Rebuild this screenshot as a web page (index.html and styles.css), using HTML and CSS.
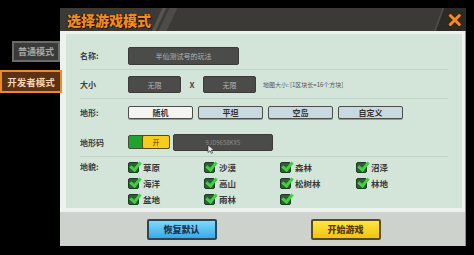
FILE: index.html
```html
<!DOCTYPE html>
<html lang="zh-CN">
<head>
  <meta charset="UTF-8">
  <title>选择游戏模式</title>
  <link rel="stylesheet" href="styles.css">
</head>
<body>
  <div class="screen">
    <div class="tabs">
      <div class="tab">普通模式</div>
      <div class="tab activo">开发者模式</div>
    </div>

    <div class="janela">
      <div class="titulo">
        <h1>选择游戏模式</h1>
        <div class="listras"><span></span><span></span></div>
        <div class="espaco"></div>
        <div class="canto">
          <svg width="14" height="14" viewBox="0 0 14 14">
            <path d="M2.5 2.5 L11.5 11.5 M11.5 2.5 L2.5 11.5" stroke="#3a2410" stroke-width="5" stroke-linecap="round"/>
            <path d="M2.5 2.5 L11.5 11.5 M11.5 2.5 L2.5 11.5" stroke="#f58a22" stroke-width="3" stroke-linecap="round"/>
          </svg>
        </div>
      </div>

      <div class="painel">
        <div class="conteudo">
          <div class="linha l-nome">
            <div class="rotulo">名称:</div>
            <div class="campo nome">半仙测试号的玩法</div>
          </div>

          <div class="linha l-tam">
            <div class="rotulo">大小</div>
            <div class="campo tam">无限</div>
            <div class="xis">X</div>
            <div class="campo tam">无限</div>
            <div class="dica">地图大小: [1区块长=16个方块]</div>
          </div>

          <div class="linha l-terreno">
            <div class="rotulo">地形:</div>
            <div class="opcoes">
              <button class="opcao marcada">随机</button>
              <button class="opcao">平坦</button>
              <button class="opcao">空岛</button>
              <button class="opcao">自定义</button>
            </div>
          </div>

          <div class="linha l-codigo">
            <div class="rotulo">地形码</div>
            <div class="chave"><span class="verde"></span><span class="amarelo">开</span></div>
            <div class="campo semente">9JD9658KXS
              <svg class="cursor" width="8" height="10" viewBox="0 0 8 10">
                <path d="M1 1 L1 8.5 L3 6.7 L4.4 9.4 L5.6 8.8 L4.3 6.2 L7 6.1 Z" fill="#f4f4f4" stroke="#333" stroke-width="0.7"/>
              </svg>
            </div>
          </div>

          <div class="linha l-bioma">
            <div class="rotulo">地貌:</div>
            <div class="grade">
              <div class="item"><i class="caixa"></i>草原</div>
              <div class="item"><i class="caixa"></i>沙漠</div>
              <div class="item"><i class="caixa"></i>森林</div>
              <div class="item"><i class="caixa"></i>沼泽</div>
              <div class="item"><i class="caixa"></i>海洋</div>
              <div class="item"><i class="caixa"></i>高山</div>
              <div class="item"><i class="caixa"></i>松树林</div>
              <div class="item"><i class="caixa"></i>林地</div>
              <div class="item"><i class="caixa"></i>盆地</div>
              <div class="item"><i class="caixa"></i>雨林</div>
              <div class="item"><i class="caixa"></i></div>
            </div>
          </div>
        </div>

        <div class="rodape">
          <button class="botao azul">恢复默认</button>
          <button class="botao amarelo-b">开始游戏</button>
        </div>
      </div>
    </div>
  </div>
</body>
</html>
```

FILE: styles.css
```css
*{
      padding: 0;
      margin: 0;
      box-sizing: border-box;
      font-family: "Noto Sans CJK SC", "Noto Sans", sans-serif;
}

body{
      background-color: #000;
      width: 474px;
      height: 255px;
      overflow: hidden;
}

.screen{
      display: flex;
      padding-top: 8px;
}

/* abas da esquerda */
.tabs{
      width: 60px;
      padding-top: 33px;
      display: flex;
      flex-direction: column;
      align-items: flex-end;
      gap: 8px;
}

.tab{
      width: 48px;
      height: 21px;
      display: flex;
      align-items: center;
      justify-content: center;
      background-color: #3a3a38;
      border: 2px solid #6b6b68;
      color: #a8a8a4;
      font-size: 9px;
      font-weight: 700;
}

.tab.activo{
      width: 62px;
      height: 23px;
      margin-right: -2px;
      z-index: 2;
      background-color: #5c3217;
      border-color: #ea8a28;
      color: #f4d6b6;
      font-size: 9.5px;
}

/* janela */
.janela{
      width: 406px;
}

.titulo{
      height: 23px;
      background-color: #3b3a36;
      display: flex;
      align-items: center;
      padding-left: 7px;
      overflow: hidden;
}

.titulo h1{
      font-size: 14px;
      font-weight: 900;
      color: #f28b1e;
      text-shadow: 1px 1px 0 #1e1408, -1px 0 0 #1e1408;
}

.listras{
      display: flex;
      gap: 3px;
      margin-left: 6px;
}

.listras span{
      width: 8px;
      height: 23px;
      background-color: #4d4c48;
      transform: skewX(-25deg);
}

.listras span:first-child{
      width: 4px;
      background-color: #55544f;
}

.espaco{
      flex: 1;
}

.canto{
      width: 32px;
      height: 23px;
      display: flex;
      align-items: center;
      justify-content: flex-end;
      padding-right: 5px;
      background-color: #2c2b28;
      border-left: 2px solid #4e4d49;
      transform: skewX(-20deg);
      margin-right: -4px;
}

.canto svg{
      transform: skewX(20deg);
      margin-right: 3px;
}

.painel{
      height: 215px;
      background-color: #cdd2cc;
      border-right: 1px solid #8e928c;
}

.conteudo{
      height: 181px;
      background-color: #d3e4d9;
      border-style: solid;
      border-color: #edf2ee;
      border-width: 3px 3px 4px 6px;
      padding: 0 14px;
}

.linha{
      display: flex;
      align-items: center;
}

.rotulo{
      width: 48px;
      font-size: 8px;
      color: #3e3e3e;
      font-weight: 700;
}

.l-nome{
      height: 36px;
      padding-top: 8px;
      border-bottom: 1px solid #c0d1c5;
}

.l-tam{
      height: 29px;
      border-bottom: 1px solid #c0d1c5;
      padding-top: 1px;
}

.l-terreno{
      height: 26px;
}

.l-codigo{
      height: 32px;
      padding-top: 3px;
      border-bottom: 1px solid #c0d1c5;
}

.l-bioma{
      align-items: flex-start;
      padding-top: 2px;
}

.l-bioma .rotulo{
      padding-top: 2px;
}

.campo{
      background-color: #4b4b49;
      border: 1px solid #3b3b39;
      border-radius: 2px;
      color: #b5b5b2;
      font-size: 7px;
      display: flex;
      align-items: center;
      justify-content: center;
}

.nome{
      width: 111px;
      height: 18px;
}

.tam{
      width: 53px;
      height: 17px;
}

.xis{
      width: 22px;
      text-align: center;
      font-size: 8px;
      font-weight: 700;
      color: #444;
}

.dica{
      margin-left: 7px;
      font-size: 6px;
      color: #555;
}

.opcoes{
      display: flex;
      gap: 5px;
}

.opcao{
      width: 65px;
      height: 13px;
      background-color: #c8dadf;
      border: 1px solid #4d4d4b;
      border-radius: 2px;
      box-shadow: 0 1px 0 #8e9a9a;
      font-size: 8px;
      font-weight: 700;
      color: #333;
      display: flex;
      align-items: center;
      justify-content: center;
}

.opcao.marcada{
      background-color: #f4f4f0;
}

.chave{
      display: flex;
      height: 14px;
      width: 42px;
      border: 1px solid #4a4a40;
      border-radius: 2px;
      background-color: #1fa42b;
}

.chave .verde{
      width: 13px;
}

.chave .amarelo{
      flex: 1;
      background-color: #f6cd18;
      border: 1px solid #5a4a14;
      border-radius: 2px;
      margin: -1px -1px -1px 0;
      font-size: 7px;
      color: #5a3a10;
      display: flex;
      align-items: center;
      justify-content: center;
}

.semente{
      width: 100px;
      height: 17px;
      margin-left: 3px;
      font-size: 6px;
      color: #8c8c8a;
      position: relative;
}

.cursor{
      position: absolute;
      left: 33px;
      top: 9px;
}

.grade{
      display: grid;
      grid-template-columns: repeat(4, 76px);
      grid-auto-rows: 16px;
}

.item{
      display: flex;
      align-items: center;
      gap: 4px;
      font-size: 8.5px;
      color: #3a3a3a;
      font-weight: 700;
}

.caixa{
      width: 11px;
      height: 11px;
      border: 1px solid #1d3a22;
      border-radius: 2px;
      background-color: #2f5c37;
      position: relative;
}

.caixa::after{
      content: "";
      position: absolute;
      left: 1px;
      top: -1px;
      width: 8px;
      height: 4px;
      border-left: 3px solid #3fd040;
      border-bottom: 3px solid #3fd040;
      transform: rotate(-50deg);
}

.rodape{
      height: 34px;
      display: flex;
      justify-content: center;
      align-items: center;
      gap: 94px;
      padding-left: 2px;
}

.botao{
      width: 70px;
      height: 21px;
      border-radius: 2px;
      font-size: 9px;
      font-weight: 900;
      display: flex;
      align-items: center;
      justify-content: center;
}

.azul{
      background: linear-gradient(#7fd9fa, #3aa9e8);
      border: 2px solid #2b4657;
      color: #1c3656;
}

.amarelo-b{
      background: linear-gradient(#ffe640, #f1c314);
      border: 2px solid #5b4c1c;
      color: #5a3810;
}
```
